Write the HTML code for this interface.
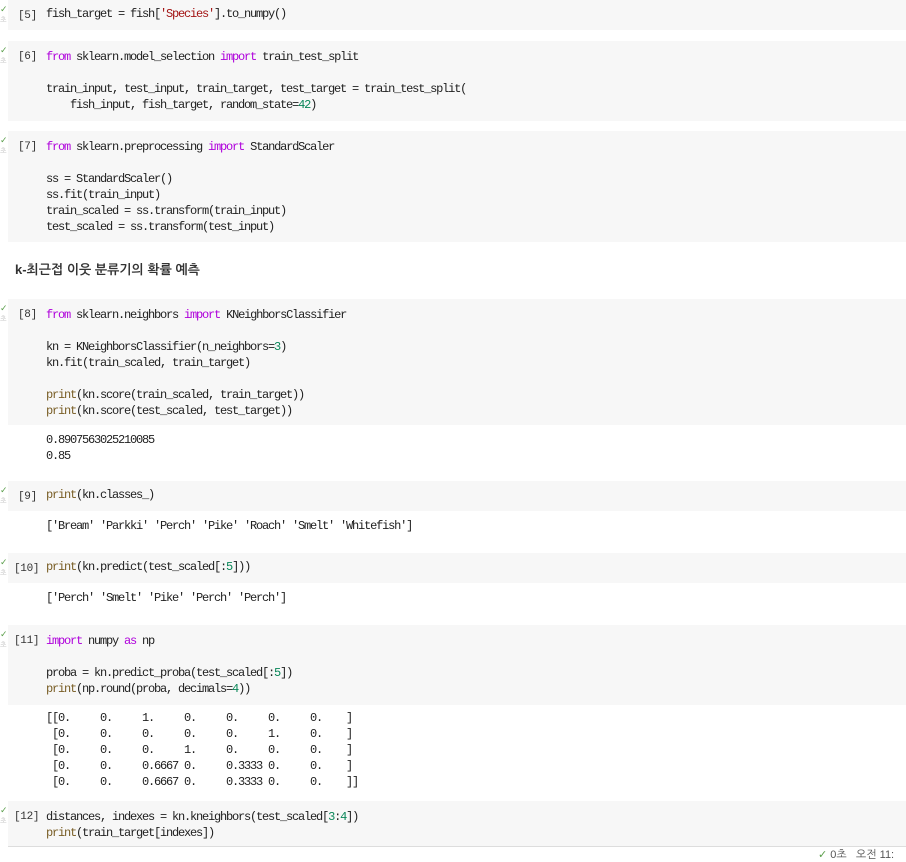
<!DOCTYPE html>
<html><head><meta charset="utf-8"><style>
body{margin:0;width:906px;height:857px;background:#fff;position:relative;overflow:hidden;font-family:"Liberation Mono","NanumGothic",monospace;}
.cell{position:absolute;left:8px;right:0;background:#f7f7f7;}
pre{margin:0;font-family:"Liberation Mono","NanumGothic",monospace;font-size:12px;letter-spacing:-1.2px;line-height:16px;color:#212121;white-space:pre;}
.code{position:absolute;left:38px;top:8px;}
.out{position:absolute;left:46px;}
.n{position:absolute;left:10px;top:8px;font-size:11px;line-height:16px;color:#333;letter-spacing:-0.3px;}
.ck{position:absolute;left:-8px;top:6px;color:#5a9e4a;font-size:9px;line-height:9px;}
.ck2{position:absolute;left:-8px;top:16px;color:#bbb;font-size:7px;}
.k{color:#af00db}.s{color:#a31515}.g{color:#098658}.f{color:#795e26}
h3{position:absolute;left:15px;top:262px;margin:0;font:bold 13px "Liberation Sans","NanumGothic",sans-serif;color:#333;}
</style></head><body>
<div class="cell" style="top:0;height:30px"><span class="ck">✓</span><span class="ck2">초</span><span class="n">[5]</span><pre class="code" style="top:6px">fish_target = fish[<span class="s">'Species'</span>].to_numpy()</pre></div>
<div class="cell" style="top:41px;height:80px"><span class="ck">✓</span><span class="ck2">초</span><span class="n">[6]</span><pre class="code"><span class="k">from</span> sklearn.model_selection <span class="k">import</span> train_test_split

train_input, test_input, train_target, test_target = train_test_split(
    fish_input, fish_target, random_state=<span class="g">42</span>)</pre></div>
<div class="cell" style="top:131px;height:111px"><span class="ck">✓</span><span class="ck2">초</span><span class="n">[7]</span><pre class="code"><span class="k">from</span> sklearn.preprocessing <span class="k">import</span> StandardScaler

ss = StandardScaler()
ss.fit(train_input)
train_scaled = ss.transform(train_input)
test_scaled = ss.transform(test_input)</pre></div>
<h3>k-최근접 이웃 분류기의 확률 예측</h3>
<div class="cell" style="top:299px;height:126px"><span class="ck">✓</span><span class="ck2">초</span><span class="n">[8]</span><pre class="code"><span class="k">from</span> sklearn.neighbors <span class="k">import</span> KNeighborsClassifier

kn = KNeighborsClassifier(n_neighbors=<span class="g">3</span>)
kn.fit(train_scaled, train_target)

<span class="f">print</span>(kn.score(train_scaled, train_target))
<span class="f">print</span>(kn.score(test_scaled, test_target))</pre></div>
<pre class="out" style="top:432px">0.8907563025210085
0.85</pre>
<div class="cell" style="top:481px;height:30px"><span class="ck">✓</span><span class="ck2">초</span><span class="n">[9]</span><pre class="code" style="top:6px"><span class="f">print</span>(kn.classes_)</pre></div>
<pre class="out" style="top:518px">['Bream' 'Parkki' 'Perch' 'Pike' 'Roach' 'Smelt' 'Whitefish']</pre>
<div class="cell" style="top:553px;height:30px"><span class="ck">✓</span><span class="ck2">초</span><span class="n" style="left:6px">[10]</span><pre class="code" style="top:6px"><span class="f">print</span>(kn.predict(test_scaled[:<span class="g">5</span>]))</pre></div>
<pre class="out" style="top:590px">['Perch' 'Smelt' 'Pike' 'Perch' 'Perch']</pre>
<div class="cell" style="top:625px;height:80px"><span class="ck">✓</span><span class="ck2">초</span><span class="n" style="left:6px">[11]</span><pre class="code"><span class="k">import</span> numpy <span class="k">as</span> np

proba = kn.predict_proba(test_scaled[:<span class="g">5</span>])
<span class="f">print</span>(np.round(proba, decimals=<span class="g">4</span>))</pre></div>
<pre class="out" style="top:710px">[[0.     0.     1.     0.     0.     0.     0.    ]
 [0.     0.     0.     0.     0.     1.     0.    ]
 [0.     0.     0.     1.     0.     0.     0.    ]
 [0.     0.     0.6667 0.     0.3333 0.     0.    ]
 [0.     0.     0.6667 0.     0.3333 0.     0.    ]]</pre>
<div class="cell" style="top:801px;height:45px;border-bottom:1px solid #ddd"><span class="ck">✓</span><span class="ck2">초</span><span class="n" style="left:6px">[12]</span><pre class="code">distances, indexes = kn.kneighbors(test_scaled[<span class="g">3</span>:<span class="g">4</span>])
<span class="f">print</span>(train_target[indexes])</pre></div>
<div style="position:absolute;left:818px;top:848px;font:11px 'Liberation Sans','NanumGothic',sans-serif;color:#555;white-space:nowrap"><span style="color:#5a9e4a">✓</span> 0초 &nbsp;&nbsp;오전 11:</div>
</body></html>
